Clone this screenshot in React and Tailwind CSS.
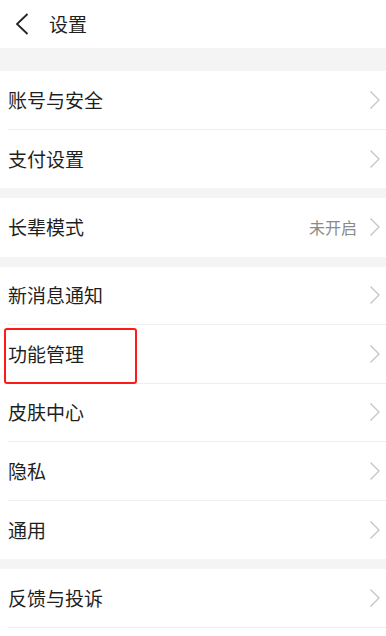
const groups = [
  [{ label: "账号与安全" }, { label: "支付设置" }],
  [{ label: "长辈模式", value: "未开启" }],
  [
    { label: "新消息通知" },
    { label: "功能管理", marked: true },
    { label: "皮肤中心" },
    { label: "隐私" },
    { label: "通用" },
  ],
  [{ label: "反馈与投诉" }],
];

function Arrow() {
  return (
    <svg width="12" height="20" viewBox="0 0 12 20" className="shrink-0">
      <path d="M1.5 1.5 L10 10 L1.5 18.5" fill="none" stroke="#c4c4c4" strokeWidth="1.3" />
    </svg>
  );
}

function Row({ item, last }) {
  return (
    <div className="relative pl-2 bg-white">
      <div
        className={`flex items-center h-[58.5px] pr-[5px] ${last ? "" : "border-b border-[#eeeeee]"}`}
      >
        <span className="flex-1 text-[19px] text-[#1f1f1f]">{item.label}</span>
        {item.value && (
          <span className="mr-[12px] text-[16px] text-[#8a8a8a]">{item.value}</span>
        )}
        <Arrow />
      </div>
      {item.marked && (
        <div className="absolute left-[4px] top-[3px] w-[133px] h-[56px] border-[2.5px] border-[#ff1a1a] rounded-[3px]" />
      )}
    </div>
  );
}

export default function App() {
  return (
    <div
      className="w-[386px] h-[636px] overflow-hidden bg-white"
      style={{ fontFamily: '"Noto Sans CJK SC", "Noto Sans", sans-serif' }}
    >
      <div className="flex items-center h-[48px] pl-[15px] gap-[20px]">
        <svg width="14" height="22" viewBox="0 0 14 22">
          <path d="M12.5 1 L2 11 L12.5 21" fill="none" stroke="#222" strokeWidth="1.8" />
        </svg>
        <span className="text-[19px] text-[#1f1f1f]">设置</span>
      </div>
      <div className="h-[23px] bg-[#f4f4f4]" />
      {groups.map((g, gi) => (
        <div key={gi}>
          {gi > 0 && <div className="h-[10px] bg-[#f4f4f4]" />}
          {g.map((item, i) => (
            <Row key={item.label} item={item} last={gi !== groups.length - 1 && i === g.length - 1} />
          ))}
        </div>
      ))}
    </div>
  );
}
